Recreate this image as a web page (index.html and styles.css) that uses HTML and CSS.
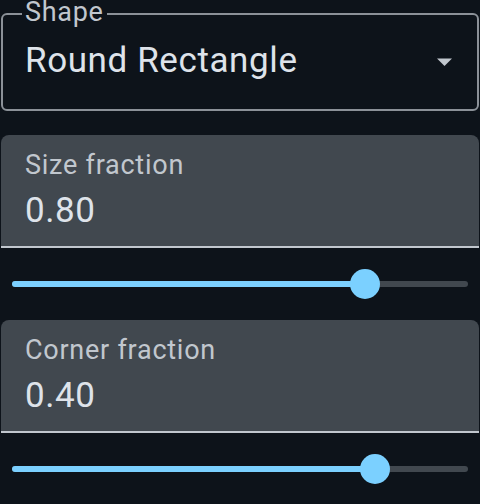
FILE: index.html
```html
<!DOCTYPE html>
<html>
<head>
<meta charset="utf-8">
<link rel="stylesheet" href="styles.css">
</head>
<body>
<div class="panel">
  <div class="select">
    <span class="select-label">Shape</span>
    <span class="select-value">Round Rectangle</span>
    <svg class="caret" width="15" height="8" viewBox="0 0 15 8"><path d="M0 0.5H15L7.5 8Z" fill="#c1c7ce"/></svg>
  </div>

  <div class="field">
    <div class="field-label">Size fraction</div>
    <div class="field-value">0.80</div>
  </div>
  <div class="slider">
    <div class="track">
      <div class="active" style="width:77.4%"></div>
      <div class="thumb" style="left:77.4%"></div>
    </div>
  </div>

  <div class="field">
    <div class="field-label">Corner fraction</div>
    <div class="field-value">0.40</div>
  </div>
  <div class="slider">
    <div class="track">
      <div class="active" style="width:79.6%"></div>
      <div class="thumb" style="left:79.6%"></div>
    </div>
  </div>
</div>
</body>
</html>
```
FILE: styles.css
```css
html, body {
  margin: 0;
  padding: 0;
  background: #0d131a;
}

body {
  font-family: Roboto, "Noto Sans", sans-serif;
  color: #dee3ea;
  width: 480px;
  height: 504px;
  overflow: hidden;
}

.panel {
  padding: 13px 1px 0;
}

.select {
  position: relative;
  box-sizing: border-box;
  height: 98px;
  border: 2px solid #8b9198;
  border-radius: 6px;
  display: flex;
  align-items: center;
  padding: 0 25px 2px 22px;
}

.select-label {
  position: absolute;
  left: 19px;
  top: -14px;
  padding: 0 3px;
  background: #0d131a;
  font-size: 27px;
  line-height: 22px;
  letter-spacing: 0.7px;
  color: #c1c7ce;
}

.select-value {
  font-size: 35px;
  line-height: 40px;
  letter-spacing: 0.6px;
  color: #dee3ea;
  flex: 1;
}

.caret {
  display: block;
  margin-top: 1px;
}

.field {
  margin-top: 24px;
  background: #41484f;
  border-radius: 8px 8px 0 0;
  border-bottom: 2px solid #c1c7ce;
  padding: 14px 24px 15px;
}

.slider + .field {
  margin-top: 0;
}

.field-label {
  font-size: 27px;
  line-height: 32px;
  letter-spacing: 0.75px;
  color: #c1c7ce;
}

.field-value {
  margin-top: 9px;
  font-size: 35px;
  line-height: 41px;
  letter-spacing: 0.6px;
  color: #dee3ea;
}

.slider {
  height: 72px;
  display: flex;
  align-items: center;
  padding: 0 11px;
}

.track {
  position: relative;
  flex: 1;
  height: 6px;
  border-radius: 3px;
  background: #41484f;
}

.active {
  position: absolute;
  left: 0;
  top: 0;
  height: 100%;
  border-radius: 3px 0 0 3px;
  background: #7bd0ff;
}

.thumb {
  position: absolute;
  top: 50%;
  width: 30px;
  height: 30px;
  border-radius: 50%;
  background: #7bd0ff;
  transform: translate(-50%, -50%);
}
```
